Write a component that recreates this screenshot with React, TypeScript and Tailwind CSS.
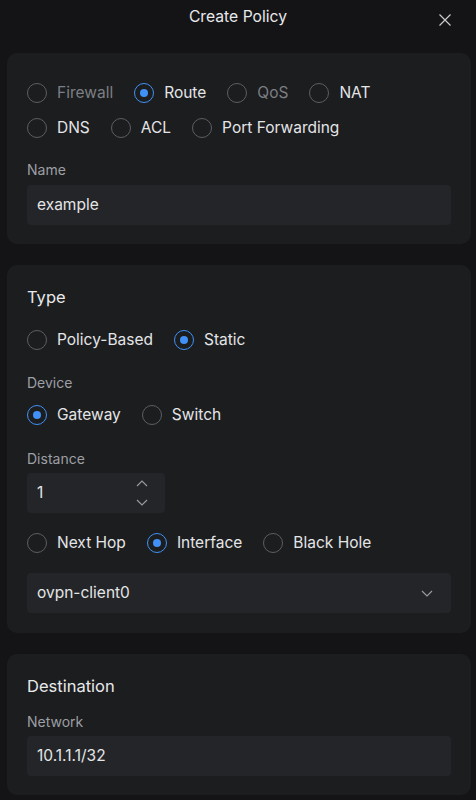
import { useState } from 'react';

const FONT = { fontFamily: 'Inter, "Noto Sans", sans-serif' };

type Opt = { label: string; disabled?: boolean };

function Radio({ label, checked, disabled, onClick }: { label: string; checked?: boolean; disabled?: boolean; onClick?: () => void }) {
  return (
    <button type="button" onClick={onClick} className="flex h-6 items-center gap-[10px]">
      <span
        className={`flex h-5 w-5 items-center justify-center rounded-full border ${
          checked ? 'border-[#4090f7]' : 'border-[#5b5e63]'
        }`}
      >
        {checked && <span className="h-2 w-2 rounded-full bg-[#4090f7]" />}
      </span>
      <span className={`text-[15.5px] leading-6 ${disabled ? 'text-[#7c7f84]' : 'text-[#e4e5e7]'}`}>{label}</span>
    </button>
  );
}

function RadioGroup({ options, value, onChange, className = '' }: { options: Opt[]; value: string; onChange: (v: string) => void; className?: string }) {
  return (
    <div className={`flex flex-wrap gap-x-[21px] gap-y-[11px] ${className}`}>
      {options.map((o) => (
        <Radio key={o.label} label={o.label} disabled={o.disabled} checked={value === o.label} onClick={() => onChange(o.label)} />
      ))}
    </div>
  );
}

function Label({ children, className = '' }: { children: React.ReactNode; className?: string }) {
  return <div className={`text-[14px] leading-5 text-[#9c9fa4] ${className}`}>{children}</div>;
}

function Chevron({ up = false, className = '' }: { up?: boolean; className?: string }) {
  return (
    <svg width="12" height="7" viewBox="0 0 12 7" fill="none" className={className} aria-hidden="true">
      <path d={up ? 'M1 6L6 1L11 6' : 'M1 1L6 6L11 1'} stroke="#9a9da2" strokeWidth="1.1" />
    </svg>
  );
}

export default function App() {
  const [category, setCategory] = useState('Route');
  const [type, setType] = useState('Static');
  const [device, setDevice] = useState('Gateway');
  const [hop, setHop] = useState('Interface');

  return (
    <div style={FONT} className="min-h-[800px] w-[476px] bg-[#141416]">
      {/* header */}
      <div className="relative flex h-[34px] items-center justify-center">
        <span className="text-[15.7px] text-[#e8e9eb]">Create Policy</span>
        <button type="button" className="absolute left-[439px] top-[14px]" aria-label="Close">
          <svg width="12" height="12" viewBox="0 0 12 12" fill="none">
            <path d="M0.5 0.5L11.5 11.5M11.5 0.5L0.5 11.5" stroke="#c9cacd" strokeWidth="1.2" />
          </svg>
        </button>
      </div>

      <div className="ml-[7px] mr-[5px] mt-[19px] flex flex-col gap-[21px]">
        {/* card 1 */}
        <section className="rounded-[10px] bg-[#1c1d1f] px-5 pb-[19px] pt-[28px]">
          <RadioGroup
            value={category}
            onChange={setCategory}
            options={[
              { label: 'Firewall', disabled: true },
              { label: 'Route' },
              { label: 'QoS', disabled: true },
              { label: 'NAT' },
              { label: 'DNS' },
              { label: 'ACL' },
              { label: 'Port Forwarding' },
            ]}
          />
          <Label className="mt-5">Name</Label>
          <div className="mt-[5px] flex h-10 items-center rounded-[4px] bg-[#242528] px-[10px] text-[15.5px] text-[#e4e5e7]">example</div>
        </section>

        {/* card 2 */}
        <section className="rounded-[10px] bg-[#1c1d1f] px-5 pb-5 pt-5">
          <div className="text-[16.5px] leading-6 text-[#e8e9eb]">Type</div>
          <RadioGroup className="mt-[19px]" value={type} onChange={setType} options={[{ label: 'Policy-Based' }, { label: 'Static' }]} />
          <Label className="mt-[21px]">Device</Label>
          <RadioGroup className="mt-[10px]" value={device} onChange={setDevice} options={[{ label: 'Gateway' }, { label: 'Switch' }]} />
          <Label className="mt-[22px]">Distance</Label>
          <div className="mt-1 flex h-10 w-[138px] items-center justify-between rounded-[4px] bg-[#242528] pl-[10px] pr-[17px] text-[15.5px] text-[#e4e5e7]">
            <span>1</span>
            <div className="flex flex-col gap-[12px]">
              <Chevron up />
              <Chevron />
            </div>
          </div>
          <RadioGroup
            className="mt-[18px]"
            value={hop}
            onChange={setHop}
            options={[{ label: 'Next Hop' }, { label: 'Interface' }, { label: 'Black Hole' }]}
          />
          <div className="mt-[18px] flex h-10 items-center justify-between rounded-[4px] bg-[#242528] pl-[10px] pr-[18px] text-[15.5px] text-[#e4e5e7]">
            <span>ovpn-client0</span>
            <Chevron />
          </div>
        </section>

        {/* card 3 */}
        <section className="rounded-[10px] bg-[#1c1d1f] px-5 pb-[19px] pt-5">
          <div className="text-[16.5px] leading-6 text-[#e8e9eb]">Destination</div>
          <Label className="mt-[14px]">Network</Label>
          <div className="mt-1 flex h-10 items-center rounded-[4px] bg-[#242528] px-[10px] text-[15.5px] text-[#e4e5e7]">10.1.1.1/32</div>
        </section>
      </div>
    </div>
  );
}
